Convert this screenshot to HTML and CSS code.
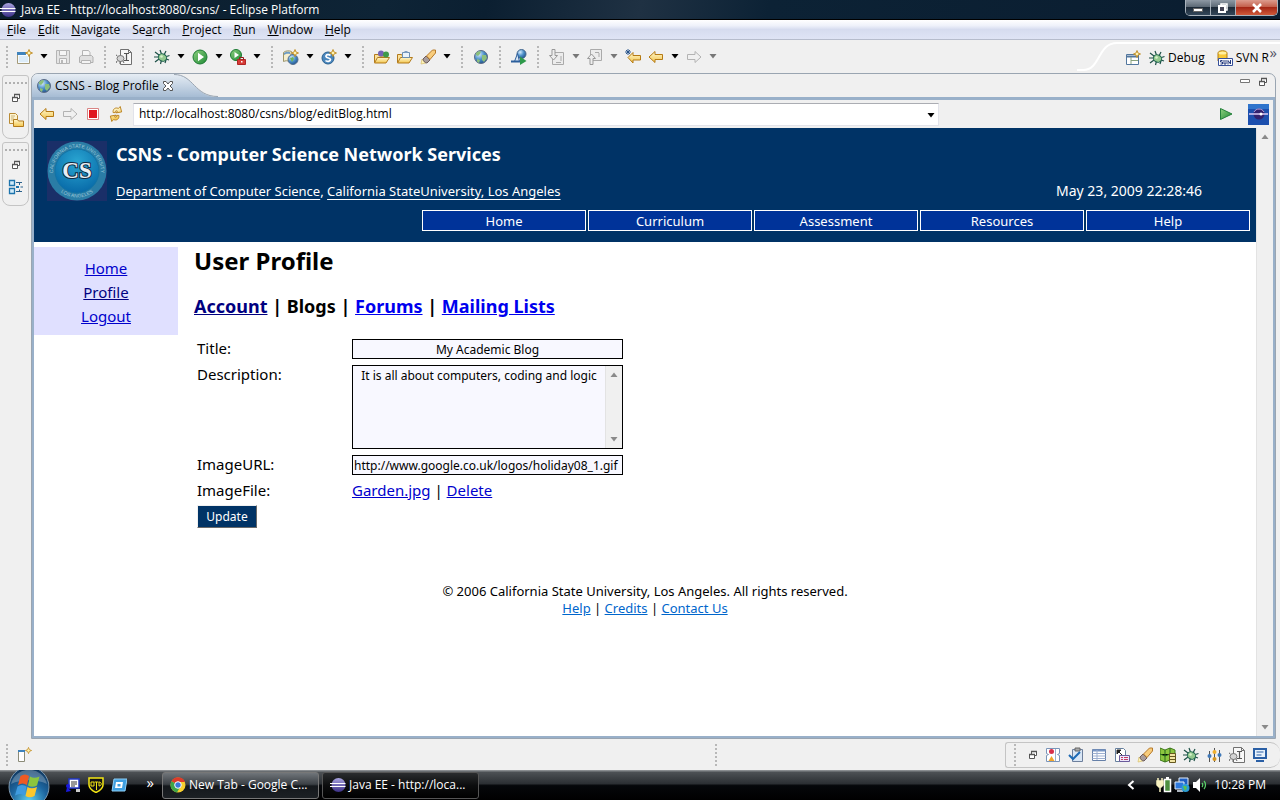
FILE: index.html
```
<!DOCTYPE html>
<html lang="en">
<head>
<meta charset="UTF-8">
<meta name="viewport" content="width=device-width, initial-scale=1.0">
<title>Java EE - Eclipse Platform</title>
<link rel="stylesheet" href="styles.css">
</head>
<body>
    <!-- shared icons -->
    <svg class="defs" width="0" height="0" aria-hidden="true">
        <defs>
            <linearGradient id="g-gold" x1="0" y1="0" x2="0" y2="1"><stop offset="0" stop-color="#fff8d0"/><stop offset="1" stop-color="#f3c54c"/></linearGradient>
            <linearGradient id="g-green" x1="0" y1="0" x2="1" y2="1"><stop offset="0" stop-color="#8fd07f"/><stop offset="1" stop-color="#1d8a35"/></linearGradient>
            <radialGradient id="g-globe" cx="0.35" cy="0.3" r="0.8"><stop offset="0" stop-color="#d6ecff"/><stop offset="0.5" stop-color="#4b8fc8"/><stop offset="1" stop-color="#1b4a86"/></radialGradient>
            <linearGradient id="g-ecl" x1="0" y1="0" x2="0" y2="1"><stop offset="0" stop-color="#a9a4e0"/><stop offset="1" stop-color="#3a2f86"/></linearGradient>
            <radialGradient id="g-orb" cx="0.5" cy="0.85" r="0.9"><stop offset="0" stop-color="#5fd0f0"/><stop offset="0.5" stop-color="#1d66a0"/><stop offset="1" stop-color="#0c2c50"/></radialGradient>
            <radialGradient id="g-seal" cx="0.5" cy="0.3" r="0.7"><stop offset="0" stop-color="#2aa6d2"/><stop offset="1" stop-color="#086aa8"/></radialGradient>
        </defs>
        <symbol id="i-eclipse" viewBox="0 0 16 16"><circle cx="8.500" cy="8" r="7" fill="url(#g-ecl)"/><path d="M0 6.500h15.500M0 9.500h15.500" stroke="#fff" stroke-width="1.200"/></symbol>
        <symbol id="i-star" viewBox="0 0 8 8"><path d="M4 .5L5 3l2.500 1L5 5 4 7.500 3 5 .5 4 3 3z" fill="#fff3b0" stroke="#c08a1e" stroke-width=".9"/></symbol>
        <symbol id="i-new" viewBox="0 0 16 16"><path d="M.5 3.500h12v11H.5z" fill="#f4faff" stroke="#a59a78"/><path d="M0 3h9v3H0z" fill="#3f83bd"/><path d="M2 7h9v6H2z" fill="#dcecf8"/><use href="#i-star" x="8" y="0" width="8" height="8"/></symbol>
        <symbol id="i-save" viewBox="0 0 16 16"><path d="M1.500 1.500h13v13h-13z" fill="#e4e4e4" stroke="#b4b4b4"/><path d="M4.500 1.500h7v5h-7zM4.500 9.500h7v5h-7z" fill="#f4f4f4" stroke="#b4b4b4"/><path d="M6 11h2v3H6z" fill="#b8b8b8"/></symbol>
        <symbol id="i-print" viewBox="0 0 16 16"><path d="M4.500 1.500h6l1.500 2v4h-7.500z" fill="#f6f6f6" stroke="#b4b4b4"/><path d="M1.500 8l2-1.500h10l1.500 1.500v5.500h-13.500z" fill="#e0e0e0" stroke="#b0b0b0"/><path d="M3.500 11.500h9v3h-9z" fill="#f4f4f4" stroke="#b4b4b4"/></symbol>
        <symbol id="i-jar" viewBox="0 0 16 16"><path d="M4.500 .5h8l3 3v12h-11z" fill="#f8f8f8" stroke="#707070"/><path d="M12.500 .5v3h3" fill="none" stroke="#707070"/><path d="M8 4.500h5M10.500 4.500v7M8 11.500h5" stroke="#555" stroke-width="1.200"/><ellipse cx="4.500" cy="9.500" rx="3.500" ry="3" fill="#d4d4d4" stroke="#777"/><path d="M1 12l-1 2M4 12.500V15M7 12l1 2M1 7L0 5.500" stroke="#666"/></symbol>
        <symbol id="i-bug" viewBox="0 0 16 16"><path d="M1 3l4 3M6 1l1.500 4M12 2l-2 4M0 8h5M1 13l4-3M6.500 15l1-4M11 14l1-3M15.500 6.500L11 8M15 11l-3-1" stroke="#1e5047" stroke-width="1.200"/><ellipse cx="8.500" cy="8.500" rx="4.300" ry="3.600" transform="rotate(25 8.500 8.500)" fill="#93c98f" stroke="#1f6350"/><circle cx="7.500" cy="7.500" r="1.300" fill="#d9f2cd"/></symbol>
        <symbol id="i-run" viewBox="0 0 16 16"><circle cx="8" cy="8" r="7" fill="url(#g-green)" stroke="#1c7a33"/><path d="M6 3.800L12 8l-6 4.200z" fill="#fff"/></symbol>
        <symbol id="i-ext" viewBox="0 0 16 16"><circle cx="6" cy="6" r="5.500" fill="url(#g-green)" stroke="#1c7a33"/><path d="M4.500 3l4.500 3-4.500 3z" fill="#fff"/><path d="M7.500 10.500h8v5h-8z" fill="#d63b36" stroke="#b02626"/><path d="M9.500 10.500v-2h4v2" fill="none" stroke="#8e1a1a"/><path d="M11 12h1.500v1.500H11z" fill="#fff"/></symbol>
        <symbol id="i-globe" viewBox="0 0 16 16"><circle cx="8" cy="8" r="6.500" fill="url(#g-globe)" stroke="#5b6b86"/><path d="M3 4c2-2 4-2 5-1.500L7 5 5 7 3 6zM9 6l4 0 1 3-3 4-2-2zM4 10l3 1-1 3-2-1.500z" fill="#8cbf7c"/></symbol>
        <symbol id="i-webnew" viewBox="0 0 16 16"><path d="M.5 3.500c2-2 6-2 8-1l-2 10c-2-1-4-1-6 0z" fill="#f6efcf" stroke="#9c9468"/><path d="M1 4c2-1.500 4-1.500 6-1v2c-2-.5-4-.5-6 1z" fill="#6d9cc4"/><circle cx="10" cy="10.500" r="5" fill="url(#g-globe)" stroke="#55708e"/><path d="M7 9l3-1 1 2-2 3z" fill="#6db35c"/><use href="#i-star" x="8" y="0" width="8" height="8"/></symbol>
        <symbol id="i-servlet" viewBox="0 0 16 16"><circle cx="7" cy="9" r="6" fill="#4a86bd" stroke="#28608f"/><path d="M9.500 6.500C8 5 4.500 5.500 5 7.500s4.500 1 4.500 3-3.500 2.500-5 1" fill="none" stroke="#fff" stroke-width="1.700"/><use href="#i-star" x="8" y="0" width="8" height="8"/></symbol>
        <symbol id="i-folder" viewBox="0 0 16 16"><path d="M.5 13.500v-8h4l1 1.500h7v2" fill="#fbe19a" stroke="#b27a1c"/><path d="M.5 14l3-5.500h12L12 14z" fill="url(#g-gold)" stroke="#b27a1c"/></symbol>
        <symbol id="i-type" viewBox="0 0 16 16"><use href="#i-folder" width="16" height="16"/><circle cx="7" cy="4.500" r="3" fill="#7564b5"/><circle cx="12" cy="5.500" r="3" fill="#3f9a4b"/></symbol>
        <symbol id="i-task" viewBox="0 0 16 16"><use href="#i-folder" width="16" height="16"/><path d="M5.500 3.500h7v5h-7z" fill="#eaf3fb" stroke="#6c8fb3"/><path d="M7.500 2h3v2h-3z" fill="#7d9cc0"/></symbol>
        <symbol id="i-torch" viewBox="0 0 16 16"><path d="M1 15l1-5 4 4z" fill="#fff4b8" stroke="#d8bf6c" stroke-width=".7"/><path d="M3 10l3-3 4 4-3 3c-2 0-4-2-4-4z" fill="#a79c9c" stroke="#6c5b5b"/><path d="M6.500 7L12.500 1h3v3L10 10.500z" fill="#f8cd7d" stroke="#b67a2a"/></symbol>
        <symbol id="i-soap" viewBox="0 0 16 16"><circle cx="10.500" cy="5" r="4.500" fill="url(#g-globe)" stroke="#47688e"/><path d="M.5 12.500h3l3-8 2 8" fill="#d8e6f5" stroke="#2c5f9c"/><path d="M0 12.500h9" stroke="#2c5f9c" stroke-width="2"/><path d="M9 7.500L15.500 12 9 16z" fill="#2e9a4b"/></symbol>
        <symbol id="i-prevann" viewBox="0 0 16 16"><path d="M3.500 3.500h11v12h-11z" fill="#ececec" stroke="#aaa"/><path d="M7 13.500h5M12 7v5" stroke="#aaa"/><path d="M3 .5h3v6h2.500L4.500 11 .5 6.500H3z" fill="#eee" stroke="#999"/></symbol>
        <symbol id="i-nextann" viewBox="0 0 16 16"><path d="M3.500 .5h11v11h-11z" fill="#ececec" stroke="#aaa"/><path d="M8 3.500h4M12 4v4" stroke="#aaa"/><path d="M3 15.500h3v-6h2.500L4.500 5 .5 9.500H3z" fill="#eee" stroke="#999"/></symbol>
        <symbol id="i-back" viewBox="0 0 16 16"><path d="M1 8l6-5.500v3h7.500v5H7v3z" fill="url(#g-gold)" stroke="#b57a14" stroke-linejoin="round"/></symbol>
        <symbol id="i-fwd" viewBox="0 0 16 16"><path d="M15 8L9 2.500v3H1.500v5H9v3z" fill="#f0f0f0" stroke="#b3b3b3" stroke-linejoin="round"/></symbol>
        <symbol id="i-lastedit" viewBox="0 0 16 16"><path d="M3 8.500l5-5v3h7.500v4.500H8v3z" fill="url(#g-gold)" stroke="#b57a14"/><path d="M3 0v6M0 3h6M1 1l4 4M5 1L1 5" stroke="#1e4c86" stroke-width=".9"/></symbol>
        <symbol id="i-caret" viewBox="0 0 8 5"><path d="M.5 0h7L4 4.500z" fill="currentColor"/></symbol>
        <symbol id="i-persp" viewBox="0 0 16 16"><path d="M1.500 4.500h12v10h-12z" fill="#fff" stroke="#52779e"/><path d="M1.500 6.500h12" stroke="#52779e" stroke-width="2"/><path d="M6 7v7M6 10.500h7" stroke="#8aa37c"/><use href="#i-star" x="8" y="0" width="8" height="8"/></symbol>
        <symbol id="i-svn" viewBox="0 0 16 16"><path d="M1 3c0-3 9-3 9 0v8H1z" fill="#f8c938" stroke="#b07d12"/><ellipse cx="5.500" cy="3" rx="4" ry="1.500" fill="#fff0a0"/><path d="M1.500 8.500h14v7h-14z" fill="#fff" stroke="#36509a"/><path d="M5.500 10.500h-2v1.500h2v2h-2M7 10v4h2v-4M11 14.500v-4l2.500 3.500v-4" fill="none" stroke="#22387c"/></symbol>
        <symbol id="i-min" viewBox="0 0 10 8"><path d="M.5 2.500h9v3h-9z" fill="#fff" stroke="#777"/></symbol>
        <symbol id="i-restore" viewBox="0 0 10 10"><path d="M3.500 1.500h5v4h-5z" fill="#fff" stroke="#555"/><path d="M1.500 4.500h5v4h-5z" fill="#fff" stroke="#555"/><path d="M3 1.500h6M1 4.500h6" stroke="#555" stroke-width="1.500"/></symbol>
        <symbol id="i-files" viewBox="0 0 16 16"><path d="M1.500 1.500h6l2 2v8h-8z" fill="#fdf3cf" stroke="#b98b35"/><path d="M3 4h4M3 6h3M3 8h3" stroke="#c9b27a"/><path d="M5.500 14.500v-7h4l1 1.500h5v5.500z" fill="url(#g-gold)" stroke="#b27a1c"/></symbol>
        <symbol id="i-outline" viewBox="0 0 16 16"><path d="M1.500 1.500h5v5h-5zM1.500 9.500h5v5h-5z" fill="#d3ecfa" stroke="#1d74ad" stroke-width="1.300"/><path d="M8 3.500h6M12.500 8h2.500M8 12.500h6M11.500 4v2M11.500 10.500v2" stroke="#2a618c"/><path d="M8 7h3v2H8z" fill="#1d74ad"/></symbol>
        <symbol id="i-stop" viewBox="0 0 16 16"><path d="M2.500 2.500h11v11h-11z" fill="#fff" stroke="#d98484"/><path d="M4 4h8v8H4z" fill="#e0161f"/></symbol>
        <symbol id="i-refresh" viewBox="0 0 16 16"><path d="M15 3l-1 5.500-5.500-1.500 2-1c-1-1.500-2-1-2.500.5L6 5.500C7 2 10.500 1.500 12.500 4zM1 13l1-5.500L7.500 9l-2 1c1 1.500 2 1 2.500-.5l2 1C9 14 5.500 14.500 3.500 12z" fill="url(#g-gold)" stroke="#b57a14" stroke-width=".8" transform="rotate(-25 8 8)"/></symbol>
        <symbol id="i-go" viewBox="0 0 16 16"><path d="M2.500 2.500L14 8 2.500 13.500z" fill="url(#g-green)" stroke="#23803a"/></symbol>
        <symbol id="i-fast" viewBox="0 0 16 16"><path d="M1.500 3.500h6v11h-6z" fill="#fff" stroke="#8b8b78"/><path d="M1 3h7v2H1z" fill="#3f83bd"/><use href="#i-star" x="8" y="0" width="7" height="7"/></symbol>
        <symbol id="i-marks" viewBox="0 0 16 16"><path d="M1.500 1.500h13v5l-2 1 2 1v6h-13v-6l2-1-2-1z" fill="#fff" stroke="#7a94b8"/><circle cx="6.500" cy="4.500" r="2.500" fill="#d8304a"/><path d="M3.500 14l3-5 3 5z" fill="#f0a42a"/><path d="M10.500 2v12" stroke="#9db0cb"/></symbol>
        <symbol id="i-tasks" viewBox="0 0 16 16"><path d="M4.500 2.500h10v12h-10z" fill="#d9e6f5" stroke="#6d7f9c"/><path d="M7 1h5v3H7z" fill="#a9a9a9" stroke="#666"/><path d="M1 8l4 4 7-7" fill="none" stroke="#1e6ab4" stroke-width="2"/></symbol>
        <symbol id="i-props" viewBox="0 0 16 16"><path d="M1.500 2.500h13v11h-13z" fill="#fff" stroke="#6680a8"/><path d="M1.500 3.500h13" stroke="#7896c4" stroke-width="2"/><path d="M1.500 6.500h13M1.500 9h13M1.500 11.500h13M6 3v10" stroke="#9eb0d0"/></symbol>
        <symbol id="i-snip" viewBox="0 0 16 16"><path d="M1.500 1.500h8l2 2v11h-10z" fill="#fff" stroke="#66809e"/><path d="M3 3h4L3 7zM4 4l4 4" fill="#222" stroke="#222"/><path d="M5.500 8.500h10v6h-10z" fill="#eee8fa" stroke="#6a5b9b"/><path d="M7 10.500h2M10 10.500h4M7 12.500h2M10 12.500h4" stroke="#c33c68"/></symbol>
        <symbol id="i-data" viewBox="0 0 16 16"><path d="M0 1l5 2 5-2 5 2v12l-5-2-5 2-5-2z" fill="#8cc63f" stroke="#3f7a1c"/><path d="M5 3v12M10 1v12M0 7l5 2 5-2" stroke="#2a6b1f"/><path d="M9.500 6.500h6v9h-6z" fill="#f2e6a4" stroke="#65581f"/><path d="M9.500 9.500h6M9.500 12.500h6" stroke="#65581f"/></symbol>
        <symbol id="i-sliders" viewBox="0 0 16 16"><path d="M3.500 4v11M8.500 1v14M13.500 3v12" stroke="#555"/><circle cx="3.500" cy="9" r="2" fill="#3f78b8"/><circle cx="8.500" cy="5" r="2" fill="#f0b02e"/><circle cx="8.500" cy="12" r="2" fill="#d69620"/><circle cx="13.500" cy="8" r="2" fill="#3f78b8"/></symbol>
        <symbol id="i-console" viewBox="0 0 16 16"><path d="M2 2h12v9H2z" fill="#e8f2fc" stroke="#2a5fa5" stroke-width="2"/><path d="M4.500 5h7M4.500 8h5" stroke="#2a5fa5"/><path d="M4 14h8" stroke="#2a5fa5" stroke-width="2"/></symbol>
    </svg>

    <header class="titlebar">
        <svg class="icon"><use href="#i-eclipse"/></svg>
        <span class="titlebar-text">Java EE - http://localhost:8080/csns/ - Eclipse Platform</span>
        <div class="window-buttons">
            <button type="button" aria-label="Minimize"><svg width="14" height="12"><path d="M2.500 6.500h9v3h-9z" fill="#fff" stroke="#666"/></svg></button>
            <button type="button" aria-label="Restore"><svg width="14" height="12"><path d="M5 2h6v6H5z" fill="none" stroke="#fff" stroke-width="1.500"/><path d="M3 4h6v6H3z" fill="#445" stroke="#fff" stroke-width="2"/></svg></button>
            <button type="button" class="close" aria-label="Close"><svg width="14" height="12"><path d="M3 2l8 8M11 2l-8 8" stroke="#fff" stroke-width="2.500"/></svg></button>
        </div>
    </header>

    <nav class="menubar">
        <button type="button"><u>F</u>ile</button>
        <button type="button"><u>E</u>dit</button>
        <button type="button"><u>N</u>avigate</button>
        <button type="button">Se<u>a</u>rch</button>
        <button type="button"><u>P</u>roject</button>
        <button type="button"><u>R</u>un</button>
        <button type="button"><u>W</u>indow</button>
        <button type="button"><u>H</u>elp</button>
    </nav>

    <div class="toolbar">
        <span class="grip"></span>
        <button type="button" class="tool" aria-label="New"><svg class="icon"><use href="#i-new"/></svg></button>
        <button type="button" class="drop" aria-label="New menu"><svg class="caret"><use href="#i-caret"/></svg></button>
        <button type="button" class="tool" aria-label="Save"><svg class="icon"><use href="#i-save"/></svg></button>
        <button type="button" class="tool" aria-label="Print"><svg class="icon"><use href="#i-print"/></svg></button>
        <span class="grip"></span>
        <button type="button" class="tool" aria-label="Skip breakpoints"><svg class="icon"><use href="#i-jar"/></svg></button>
        <span class="grip"></span>
        <button type="button" class="tool" aria-label="Debug"><svg class="icon"><use href="#i-bug"/></svg></button>
        <button type="button" class="drop" aria-label="Debug menu"><svg class="caret"><use href="#i-caret"/></svg></button>
        <button type="button" class="tool" aria-label="Run"><svg class="icon"><use href="#i-run"/></svg></button>
        <button type="button" class="drop" aria-label="Run menu"><svg class="caret"><use href="#i-caret"/></svg></button>
        <button type="button" class="tool" aria-label="External tools"><svg class="icon"><use href="#i-ext"/></svg></button>
        <button type="button" class="drop" aria-label="External tools menu"><svg class="caret"><use href="#i-caret"/></svg></button>
        <span class="grip"></span>
        <button type="button" class="tool" aria-label="New web project"><svg class="icon"><use href="#i-webnew"/></svg></button>
        <button type="button" class="drop" aria-label="New web project menu"><svg class="caret"><use href="#i-caret"/></svg></button>
        <button type="button" class="tool" aria-label="New servlet"><svg class="icon"><use href="#i-servlet"/></svg></button>
        <button type="button" class="drop" aria-label="New servlet menu"><svg class="caret"><use href="#i-caret"/></svg></button>
        <span class="grip"></span>
        <button type="button" class="tool" aria-label="Open type"><svg class="icon"><use href="#i-type"/></svg></button>
        <button type="button" class="tool" aria-label="Open task"><svg class="icon"><use href="#i-task"/></svg></button>
        <button type="button" class="tool" aria-label="Search"><svg class="icon"><use href="#i-torch"/></svg></button>
        <button type="button" class="drop" aria-label="Search menu"><svg class="caret"><use href="#i-caret"/></svg></button>
        <span class="grip"></span>
        <button type="button" class="tool" aria-label="Web browser"><svg class="icon"><use href="#i-globe"/></svg></button>
        <span class="grip"></span>
        <button type="button" class="tool" aria-label="Web services"><svg class="icon"><use href="#i-soap"/></svg></button>
        <span class="grip"></span>
        <button type="button" class="tool" aria-label="Next annotation"><svg class="icon"><use href="#i-prevann"/></svg></button>
        <button type="button" class="drop dim" aria-label="Next annotation menu"><svg class="caret"><use href="#i-caret"/></svg></button>
        <button type="button" class="tool" aria-label="Previous annotation"><svg class="icon"><use href="#i-nextann"/></svg></button>
        <button type="button" class="drop dim" aria-label="Previous annotation menu"><svg class="caret"><use href="#i-caret"/></svg></button>
        <button type="button" class="tool" aria-label="Last edit"><svg class="icon"><use href="#i-lastedit"/></svg></button>
        <button type="button" class="tool" aria-label="Back"><svg class="icon"><use href="#i-back"/></svg></button>
        <button type="button" class="drop" aria-label="Back menu"><svg class="caret"><use href="#i-caret"/></svg></button>
        <button type="button" class="tool" aria-label="Forward"><svg class="icon"><use href="#i-fwd"/></svg></button>
        <button type="button" class="drop dim" aria-label="Forward menu"><svg class="caret"><use href="#i-caret"/></svg></button>

        <div class="perspectives">
            <svg class="persp-curve" width="48" height="33"><path d="M0 30h6C24 30 20 3 40 3h8" fill="none" stroke="#fff" stroke-width="2"/></svg>
            <div class="persp-items">
                <button type="button" aria-label="Open perspective"><svg class="icon"><use href="#i-persp"/></svg></button>
                <button type="button"><svg class="icon"><use href="#i-bug"/></svg>Debug</button>
                <button type="button" class="persp-svn"><svg class="icon"><use href="#i-svn"/></svg>SVN R</button>
                <span class="more">»</span>
            </div>
        </div>
    </div>

    <div class="workbench">
        <aside class="trim">
            <div class="trim-group">
                <span class="trim-grip"></span>
                <button type="button" aria-label="Restore"><svg width="10" height="10"><use href="#i-restore"/></svg></button>
                <button type="button" aria-label="Project Explorer"><svg class="icon"><use href="#i-files"/></svg></button>
            </div>
            <div class="trim-group">
                <span class="trim-grip"></span>
                <button type="button" aria-label="Restore"><svg width="10" height="10"><use href="#i-restore"/></svg></button>
                <button type="button" aria-label="Outline"><svg class="icon"><use href="#i-outline"/></svg></button>
            </div>
        </aside>

        <section class="editor">
            <div class="tabs">
                <div class="tab">
                    <svg class="icon"><use href="#i-globe"/></svg>
                    <span>CSNS - Blog Profile</span>
                    <button type="button" aria-label="Close tab"><svg width="12" height="12"><path d="M1.500 1.500h2.500l2 2.500 2-2.500h2.500v2L8 6l2.500 2.500v2H8L6 8l-2 2.500H1.500v-2L4 6 1.500 3.500z" fill="#fff" stroke="#555"/></svg></button>
                </div>
                <svg class="tab-curve" width="44" height="23"><defs><linearGradient id="g-tab" x1="0" y1="0" x2="0" y2="1"><stop offset="0" stop-color="#e6edf4"/><stop offset="1" stop-color="#a6bcd4"/></linearGradient></defs><path d="M0 0c20 0 20 23 44 23H0z" fill="url(#g-tab)"/><path d="M0 .5c20 0 20 22 44 22" fill="none" stroke="#9aa5b1"/></svg>
                <div class="tab-actions">
                    <button type="button" aria-label="Minimize"><svg width="10" height="8"><use href="#i-min"/></svg></button>
                    <button type="button" aria-label="Maximize"><svg width="10" height="10"><use href="#i-restore"/></svg></button>
                </div>
            </div>

            <div class="browser">
                <div class="addressbar">
                    <button type="button" aria-label="Back"><svg class="icon"><use href="#i-back"/></svg></button>
                    <button type="button" aria-label="Forward"><svg class="icon"><use href="#i-fwd"/></svg></button>
                    <button type="button" aria-label="Stop"><svg class="icon"><use href="#i-stop"/></svg></button>
                    <button type="button" aria-label="Refresh"><svg class="icon"><use href="#i-refresh"/></svg></button>
                    <div class="url">
                        <select aria-label="Address"><option>http://localhost:8080/csns/blog/editBlog.html</option></select>
                        <svg class="caret"><use href="#i-caret"/></svg>
                    </div>
                    <button type="button" class="go" aria-label="Go"><svg class="icon"><use href="#i-go"/></svg></button>
                    <svg class="throbber" viewBox="0 0 21 21"><path d="M0 0h21v21H0z" fill="#1c4fae"/><path d="M0 0h21v5H0z" fill="#2f74cc"/><circle cx="11" cy="10" r="5.500" fill="#32216e"/><path d="M6 8c2-4 8-4 10 0" fill="none" stroke="#b7a5e0"/><path d="M1 10h19" stroke="#d9c8f4" stroke-width="1.500"/><circle cx="13" cy="10" r="1.500" fill="#fff"/></svg>
                </div>

                <div class="viewport">
                    <div class="page">
                        <header class="site-header">
                            <svg class="seal" viewBox="0 0 60 60">
                                <path d="M0 0h60v60H0z" fill="#1a2f68"/>
                                <circle cx="30" cy="30" r="29.500" fill="#2a7da6"/>
                                <circle cx="30" cy="30" r="22" fill="url(#g-seal)" stroke="#1273a5"/>
                                <path id="seal-arc" d="M7.500 39a24 24 0 1 1 45 0" fill="none"/>
                                <path id="seal-low" d="M13 50.500a27 27 0 0 0 34 0" fill="none"/>
                                <text class="seal-ring"><textPath href="#seal-arc" startOffset="50%">CALIFORNIA STATE UNIVERSITY</textPath></text>
                                <text class="seal-ring"><textPath href="#seal-low" startOffset="50%">LOS ANGELES</textPath></text>
                                <text class="seal-mark" x="30" y="37">CS</text>
                            </svg>
                            <div class="site-info">
                                <h1>CSNS - Computer Science Network Services</h1>
                                <div class="site-sub">
                                    <span><a href="#">Department of Computer Science</a>, <a href="#">California StateUniversity, Los Angeles</a></span>
                                    <span class="date">May 23, 2009 22:28:46</span>
                                </div>
                            </div>
                            <nav class="site-nav">
                                <a href="#">Home</a>
                                <a href="#">Curriculum</a>
                                <a href="#">Assessment</a>
                                <a href="#">Resources</a>
                                <a href="#">Help</a>
                            </nav>
                        </header>

                        <div class="columns">
                            <nav class="sidebar">
                                <a href="#">Home</a>
                                <a href="#" class="visited">Profile</a>
                                <a href="#">Logout</a>
                            </nav>
                            <main class="content">
                                <h2>User Profile</h2>
                                <h3><a href="#" class="visited">Account</a> | Blogs | <a href="#">Forums</a> | <a href="#">Mailing Lists</a></h3>
                                <form class="profile-form">
                                    <label for="title">Title:</label>
                                    <input type="text" id="title" name="title" value="My Academic Blog">

                                    <label for="description">Description:</label>
                                    <div class="area">
                                        <textarea id="description" name="description">It is all about computers, coding and logic</textarea>
                                        <div class="scroll">
                                            <svg class="caret up"><use href="#i-caret"/></svg>
                                            <svg class="caret"><use href="#i-caret"/></svg>
                                        </div>
                                    </div>

                                    <label for="imageurl">ImageURL:</label>
                                    <input type="text" id="imageurl" class="left" name="imageurl" value="http://www.google.co.uk/logos/holiday08_1.gif">

                                    <span>ImageFile:</span>
                                    <span><a href="#">Garden.jpg</a> | <a href="#">Delete</a></span>

                                    <button type="submit">Update</button>
                                </form>
                            </main>
                        </div>

                        <footer class="site-footer">
                            <div>© 2006 California State University, Los Angeles. All rights reserved.</div>
                            <div><a href="#">Help</a> | <a href="#">Credits</a> | <a href="#">Contact Us</a></div>
                        </footer>
                    </div>
                    <div class="scroll page-scroll">
                        <svg class="caret up"><use href="#i-caret"/></svg>
                        <svg class="caret"><use href="#i-caret"/></svg>
                    </div>
                </div>
            </div>
        </section>
    </div>

    <div class="statusbar">
        <span class="grip"></span>
        <button type="button" class="tool" aria-label="Fast view"><svg class="icon"><use href="#i-fast"/></svg></button>
        <span class="status-mid"><span class="grip"></span></span>
        <div class="views">
            <span class="grip"></span>
            <button type="button" aria-label="Restore"><svg width="10" height="10"><use href="#i-restore"/></svg></button>
            <button type="button" aria-label="Markers"><svg class="icon"><use href="#i-marks"/></svg></button>
            <button type="button" aria-label="Tasks"><svg class="icon"><use href="#i-tasks"/></svg></button>
            <button type="button" aria-label="Properties"><svg class="icon"><use href="#i-props"/></svg></button>
            <button type="button" aria-label="Snippets"><svg class="icon"><use href="#i-snip"/></svg></button>
            <button type="button" aria-label="Search"><svg class="icon"><use href="#i-torch"/></svg></button>
            <button type="button" aria-label="Data source"><svg class="icon"><use href="#i-data"/></svg></button>
            <button type="button" aria-label="Debug"><svg class="icon"><use href="#i-bug"/></svg></button>
            <button type="button" aria-label="Servers"><svg class="icon"><use href="#i-sliders"/></svg></button>
            <button type="button" aria-label="Breakpoints"><svg class="icon"><use href="#i-jar"/></svg></button>
            <button type="button" aria-label="Console"><svg class="icon"><use href="#i-console"/></svg></button>
        </div>
    </div>

    <footer class="taskbar">
        <button type="button" class="start" aria-label="Start">
            <svg viewBox="0 0 42 42"><circle cx="21" cy="21" r="20" fill="url(#g-orb)" stroke="#7d97ad"/><path d="M3 18a18.500 18.500 0 0 1 36 0c-10-5-26-5-36 0z" fill="#fff" opacity=".25"/><path d="M12.500 10c3-2 6-2 8.500 0l-2 9c-3-2-6-2-9 0z" fill="#ee5a24"/><path d="M22 10.500c3 2 6 1.500 9.500 0l-2.500 9c-3 1.500-6 2-9 0z" fill="#8cc63e"/><path d="M9.500 20.500c3-2 6-2 9 0l-2 9c-3-2-6-2-9.500 0z" fill="#3f9be0"/><path d="M19.500 21c3 2 6 1.500 9.500 0l-2.500 9c-3 1.500-6 2-9 0z" fill="#fcc72c"/></svg>
        </button>
        <div class="quick">
            <svg class="icon" viewBox="0 0 16 16"><path d="M4 2h10v9H4z" fill="#fff" stroke="#2338c8" stroke-width="1.500"/><path d="M6 5h6M6 7h6M6 9h4" stroke="#333"/><path d="M1 15l1-5 4 4z" fill="#1a1ae0"/><circle cx="3" cy="9" r="2" fill="#1a1ae0"/><path d="M11 12h4v3h-4z" fill="#ccc"/></svg>
            <svg class="icon" viewBox="0 0 16 16"><path d="M1 1h14v7c0 4-4 6-7 7.500C5 14 1 12 1 8z" fill="#111" stroke="#f3e614" stroke-width="1.500"/><path d="M3 5h3v4H3zM6.500 5h4M8.500 5v8M11 5v4c3 0 3-4 0-4" fill="none" stroke="#f3e614"/></svg>
            <svg class="icon" viewBox="0 0 16 16"><path d="M3 2h13l-2 12H1z" fill="#3f9fe0" stroke="#8fd0f8"/><path d="M5 5h7l-1 6H4z" fill="#fff"/><path d="M6.500 7h3v2.500h-3z" fill="#3f9fe0"/></svg>
            <span class="more">»</span>
        </div>
        <button type="button" class="task">
            <svg class="icon" viewBox="0 0 16 16"><circle cx="8" cy="8" r="7.500" fill="#f7ce2f"/><path d="M8 8L1.500 4.200a7.500 7.500 0 0 1 13.500.8H8z" fill="#dd3b2a"/><path d="M8 8L1.500 4.200A7.500 7.500 0 0 0 7 15.400L10 10z" fill="#3fa548"/><circle cx="8" cy="8" r="3.300" fill="#3c79d6" stroke="#fff"/></svg>
            New Tab - Google C...
        </button>
        <button type="button" class="task active"><svg class="icon"><use href="#i-eclipse"/></svg>Java EE - http://loca...</button>
        <div class="tray">
            <svg class="tray-arrow" viewBox="0 0 8 10"><path d="M6.500 1L2 5l4.500 4" fill="none" stroke="#fff" stroke-width="2"/></svg>
            <svg class="icon" viewBox="0 0 16 16"><path d="M8.500 2.500h6v12h-6z" fill="#4d8f3f" stroke="#fff" stroke-width="1.500"/><path d="M10 1h3" stroke="#fff" stroke-width="2"/><path d="M1 4h6v4L5 10H3L1 8zM2 1v3M6 1v3M4 10v5" fill="#f7f2c0" stroke="#f7f2c0" stroke-width="1.500"/></svg>
            <svg class="icon" viewBox="0 0 16 16"><path d="M5 1h9v7H5z" fill="#1e5fc4" stroke="#e4eefa"/><path d="M1 5h9v7H1z" fill="#2d78dc" stroke="#e4eefa"/><path d="M3 14h6" stroke="#e4eefa" stroke-width="1.500"/><circle cx="11.500" cy="11" r="4" fill="#2a9bd8"/><path d="M9 9l3 0 1 2-2 3z" fill="#5cc04e"/></svg>
            <svg class="icon" viewBox="0 0 16 16"><path d="M1 5h3l4-4v14l-4-4H1z" fill="#fff"/><path d="M10 6c1 1 1 3 0 4M12 4c2 2 2 6 0 8" fill="none" stroke="#5bd06a" stroke-width="1.300"/></svg>
            <span>10:28 PM</span>
        </div>
    </footer>
</body>
</html>
```
FILE: styles.css
```
* {
    box-sizing: border-box;
}
body {
    margin: 0;
    height: 100vh;
    display: flex;
    flex-direction: column;
    overflow: hidden;
    background-color: #f0f0f0;
    font-family: "Open Sans", "Segoe UI", sans-serif;
    font-size: 12px;
    line-height: 16px;
    color: #000;
}
button {
    display: flex;
    align-items: center;
    justify-content: center;
    margin: 0;
    padding: 0;
    border: none;
    background: none;
    font: inherit;
    color: inherit;
    white-space: nowrap;
}
button svg {
    flex: none;
}
.defs {
    position: absolute;
}
.icon {
    width: 16px;
    height: 16px;
    flex: none;
}
.caret {
    width: 8px;
    height: 5px;
    flex: none;
}

/* title bar */
.titlebar {
    display: flex;
    align-items: center;
    height: 20px;
    flex: none;
    background: linear-gradient(100deg, #0a1c2c 0%, #0e2436 30%, #0b1f31 38%, #1f3143 50%, #0c2235 60%, #0a1d30 100%);
    border-bottom: 1px solid #000;
    color: #fff;
}
.titlebar .icon {
    margin-right: 5px;
}
.titlebar-text {
    flex: 1;
}
.window-buttons {
    display: flex;
    align-self: flex-start;
    margin-right: 2px;
    border: 1px solid #a9b3bc;
    border-top: none;
    border-radius: 0 0 5px 5px;
    overflow: hidden;
}
.window-buttons button {
    width: 25px;
    height: 15px;
    background: linear-gradient(#8e99a4, #5d6a76 45%, #1c2a38 50%, #33475a);
    border-right: 1px solid #a9b3bc;
}
.window-buttons .close {
    width: 41px;
    border-right: none;
    background: linear-gradient(#dc9c8e, #c4604c 45%, #a52716 50%, #cf5a3a);
}

/* menu */
.menubar {
    display: flex;
    height: 20px;
    flex: none;
    padding-left: 1px;
    background: linear-gradient(#fff, #eef1fa 30%, #d6dcef 50%, #dfe4f5);
    border-bottom: 1px solid #b6bccc;
}
.menubar button {
    padding: 0 6px;
}

/* toolbar */
.toolbar {
    display: flex;
    align-items: center;
    height: 33px;
    flex: none;
}
.tool {
    width: 23px;
    height: 24px;
    flex: none;
}
.drop {
    width: 15px;
    height: 24px;
    flex: none;
}
.dim {
    color: #777;
}
.grip {
    width: 15px;
    height: 22px;
    flex: none;
    background: repeating-linear-gradient(#b8b8b8 0 2px, transparent 2px 4px) center / 2px 100% no-repeat;
}
.grip:first-child {
    width: 13px;
}
.perspectives {
    display: flex;
    align-self: stretch;
    align-items: flex-start;
    margin-left: auto;
    width: 203px;
}
.persp-curve {
    flex: none;
}
.persp-items {
    display: flex;
    align-items: center;
    gap: 8px;
    flex: 1;
    min-width: 0;
    height: 29px;
    border-top: 2px solid #fff;
    margin-top: 2px;
}
.persp-items button {
    gap: 3px;
}
.persp-items .persp-svn {
    flex: 1;
    min-width: 0;
    margin-left: 4px;
    justify-content: flex-start;
    overflow: hidden;
}
.more {
    align-self: flex-start;
    font-size: 15px;
}
.persp-items .more {
    color: #556;
    margin-left: -7px;
    padding-right: 3px;
}

/* workbench */
.workbench {
    display: flex;
    flex: 1;
    min-height: 0;
}
.trim {
    display: flex;
    flex-direction: column;
    gap: 3px;
    width: 31px;
    flex: none;
    padding: 2px 2px 0;
}
.trim-group {
    display: flex;
    flex-direction: column;
    align-items: center;
    gap: 9px;
    height: 64px;
    width: 27px;
    padding-top: 6px;
    border: 1px solid #c4c4c4;
    border-radius: 3px 3px 8px 8px;
}
.trim-grip {
    width: 22px;
    height: 2px;
    background: repeating-linear-gradient(90deg, #b0b0b0 0 2px, transparent 2px 4px);
}
.editor {
    flex: 1;
    min-width: 0;
    display: flex;
    flex-direction: column;
    margin-right: 4px;
    border: 1px solid #9aa5b1;
    border-radius: 7px 7px 0 0;
    background-color: #f0f0f0;
}
.tabs {
    display: flex;
    height: 23px;
    flex: none;
}
.tab {
    display: flex;
    align-items: center;
    gap: 3px;
    padding-left: 4px;
    border-radius: 6px 0 0 0;
    background: linear-gradient(#e6edf4, #a6bcd4);
}
.tab-curve {
    flex: none;
}
.tab-actions {
    display: flex;
    align-items: flex-start;
    gap: 8px;
    margin-left: auto;
    padding: 3px 7px 0 0;
}
.browser {
    flex: 1;
    min-height: 0;
    display: flex;
    flex-direction: column;
    border: 2px solid #99b0c9;
    border-top-width: 3px;
}
.addressbar {
    display: flex;
    align-items: center;
    height: 28px;
    flex: none;
    gap: 7px;
    padding: 0 4px 0 5px;
}
.url {
    position: relative;
    flex: 0 1 806px;
    margin-left: 2px;
}
.url select {
    display: block;
    width: 100%;
    height: 23px;
    padding: 0 5px;
    appearance: none;
    border: 1px solid #e2e3ea;
    border-top-color: #abadb3;
    border-radius: 0;
    background-color: #fff;
    font: inherit;
    color: #000;
}
.url .caret {
    position: absolute;
    right: 4px;
    top: 10px;
}
.go {
    margin-left: auto;
}
.throbber {
    width: 21px;
    height: 21px;
    margin-left: 7px;
}
.viewport {
    display: flex;
    flex: 1;
    min-height: 0;
    background-color: #fff;
}
.scroll {
    display: flex;
    flex-direction: column;
    align-items: center;
    justify-content: space-between;
    width: 17px;
    flex: none;
    padding: 6px 0;
    border-left: 1px solid #e3e3e3;
    background-color: #f0f0f0;
    color: #8a8a8a;
}
.up {
    transform: rotate(180deg);
}

/* page */
.page {
    flex: 1;
    min-width: 0;
    font-family: "Noto Sans", Tahoma, sans-serif;
    font-size: 15px;
    line-height: 24px;
}
.page a {
    color: #0000cc;
}
.page a.visited {
    color: #000080;
}
.site-header {
    display: grid;
    grid-template-columns: 60px 1fr;
    align-content: start;
    column-gap: 9px;
    height: 114px;
    padding: 13px 6px 0 13px;
    background-color: #003366;
    color: #fff;
    font-size: 13px;
}
.seal {
    width: 60px;
    height: 60px;
}
.seal-ring {
    font-family: "Liberation Sans", sans-serif;
    font-size: 5px;
    fill: #9cc8da;
    text-anchor: middle;
}
.seal-mark {
    font-family: "Liberation Serif", serif;
    font-size: 23px;
    font-weight: bold;
    fill: #e8eef2;
    stroke: #12283e;
    stroke-width: 2px;
    paint-order: stroke;
    text-anchor: middle;
}
.site-info h1 {
    margin: 0 0 12px;
    font-size: 18px;
    line-height: 26px;
}
.site-sub {
    display: flex;
    justify-content: space-between;
    padding-right: 48px;
}
.site-sub .date {
    font-size: 14px;
}
.site-header a {
    color: #fff;
    text-underline-offset: 3px;
}
.site-nav {
    grid-column: 1 / 3;
    display: flex;
    justify-content: flex-end;
    gap: 2px;
    margin-top: 7px;
}
.site-nav a {
    width: 164px;
    height: 21px;
    border: 1px solid #fff;
    background-color: #003399;
    line-height: 20px;
    text-align: center;
    text-decoration: none;
}
.columns {
    display: flex;
    align-items: flex-start;
    gap: 16px;
    padding-top: 5px;
}
.sidebar {
    display: flex;
    flex-direction: column;
    align-items: center;
    width: 144px;
    height: 88px;
    padding-top: 9px;
    background-color: #e0e0ff;
}
.content h2 {
    margin: 0;
    font-size: 24px;
    line-height: 28px;
}
.content h3 {
    margin: 18px 0;
    font-size: 18px;
    line-height: 26px;
}
.content h3 a {
    color: #0000ee;
}
.profile-form {
    display: grid;
    grid-template-columns: 152px 271px;
    column-gap: 3px;
    row-gap: 6px;
    line-height: 18px;
    padding: 2px 0 0 3px;
}
.profile-form input,
.area {
    width: 100%;
    height: 20px;
    border: 1px solid #000;
    border-radius: 0;
    background-color: #f8f8ff;
}
.profile-form input,
.profile-form textarea {
    padding: 0 1px;
    color: #000;
    font-family: "Noto Sans", Tahoma, sans-serif;
    font-size: 12px;
    line-height: 16px;
    text-align: center;
}
.profile-form .left {
    text-align: left;
}
.profile-form .area {
    display: flex;
    height: 84px;
}
.profile-form textarea {
    flex: 1;
    min-width: 0;
    padding: 2px 0;
    border: none;
    background: none;
    resize: none;
    overflow: hidden;
}
.profile-form button {
    width: 60px;
    height: 23px;
    border: 1px solid;
    border-color: #f0f0f0 #696969 #696969 #f0f0f0;
    background-color: #003366;
    color: #fff;
    font-size: 12px;
}
.site-footer {
    padding: 55px 0 0;
    font-size: 13px;
    line-height: 17px;
    text-align: center;
}
.site-footer a {
    color: #0066cc;
}

/* status bar */
.statusbar {
    display: flex;
    align-items: center;
    height: 31px;
    flex: none;
}
.status-mid {
    flex: 1;
    display: flex;
    justify-content: center;
    padding-left: 390px;
}
.views {
    display: flex;
    align-items: center;
    gap: 7px;
    height: 26px;
    padding: 0 12px 0 2px;
    border: 1px solid #c4c4c4;
    border-right: none;
    border-radius: 3px 10px 10px 3px;
}

/* taskbar */
.taskbar {
    display: flex;
    align-items: center;
    height: 30px;
    flex: none;
    background: linear-gradient(#9a9da0, #4c5054 8%, #2c3034 45%, #05070a 52%, #000);
    color: #fff;
}
.start {
    align-self: flex-start;
    width: 42px;
    height: 30px;
    margin: 0 15px 0 8px;
    align-items: flex-start;
    overflow: hidden;
}
.start svg {
    width: 42px;
    height: 42px;
    margin-top: -4px;
}
.quick {
    display: flex;
    align-items: center;
    gap: 7px;
    width: 94px;
}
.quick .more {
    margin-left: auto;
    padding-right: 5px;
    line-height: 10px;
}
.task {
    justify-content: flex-start;
    gap: 3px;
    width: 157px;
    height: 27px;
    margin-left: 3px;
    padding-left: 7px;
    border: 1px solid #777;
    border-radius: 3px;
    background: linear-gradient(#70757a, #3b4045 45%, #14181c 52%, #1c2024);
}
.task.active {
    background: linear-gradient(#2a2c2e, #0c0d0e 50%, #000);
    border-color: #555;
}
.tray {
    display: flex;
    align-items: center;
    gap: 2px;
    margin-left: auto;
    padding-right: 14px;
}
.tray-arrow {
    width: 8px;
    height: 10px;
    margin-right: 19px;
}
.tray span {
    margin-left: 4px;
}
```
